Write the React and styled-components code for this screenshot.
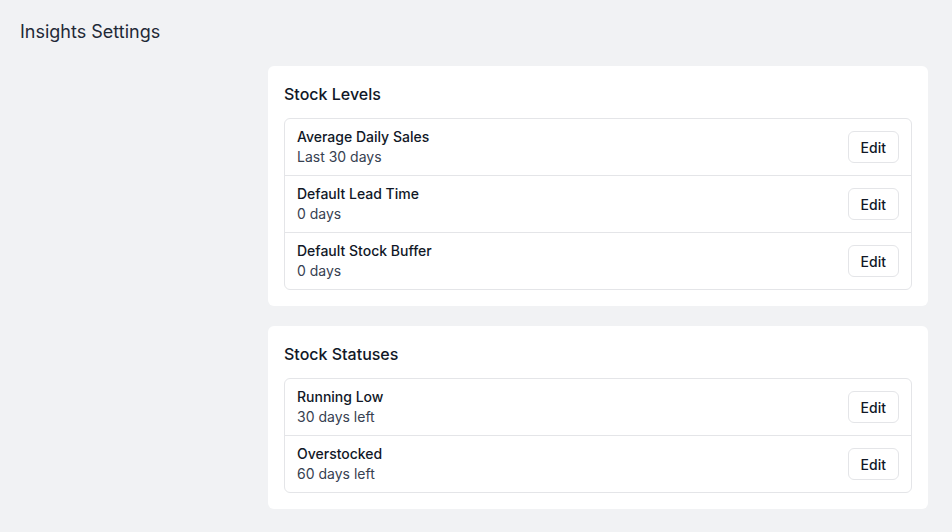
import styled, { createGlobalStyle } from "styled-components";

const GlobalStyle = createGlobalStyle`
    html, body {
        margin: 0;
        padding: 0;
        background-color: #f1f2f4;
    }
    body {
        font-family: Inter, "Noto Sans", sans-serif;
        color: #111827;
    }
`;

const Page = styled.div`
    padding: 20px 24px 24px 20px;
    box-sizing: border-box;
    min-height: 532px;
`;

const PageTitle = styled.h1`
    margin: 0;
    font-size: 18px;
    line-height: 24px;
    font-weight: 400;
    color: #1f2937;
`;

const Content = styled.div`
    display: flex;
    flex-direction: column;
    gap: 20px;
    margin: 22px 0 0 248px;
`;

const Card = styled.section`
    background-color: #ffffff;
    border-radius: 6px;
    padding: 16px;
`;

const CardTitle = styled.h2`
    margin: 0 0 12px;
    font-size: 16px;
    line-height: 24px;
    font-weight: 500;
    color: #111827;
`;

const List = styled.div`
    border: 1px solid #e4e5e8;
    border-radius: 6px;
`;

const Row = styled.div`
    display: flex;
    align-items: center;
    justify-content: space-between;
    padding: 8px 12px;
    border-top: ${(p) => (p.$first ? "none" : "1px solid #e4e5e8")};
`;

const Label = styled.div`
    font-size: 14px;
    line-height: 20px;
    font-weight: 450;
    color: #111827;
`;

const Value = styled.div`
    font-size: 14px;
    line-height: 20px;
    color: #374151;
`;

const EditButton = styled.button`
    height: 32px;
    padding: 0 12px;
    background-color: #ffffff;
    border: 1px solid #e4e5e8;
    border-radius: 6px;
    font-family: inherit;
    font-size: 14px;
    font-weight: 450;
    color: #111827;
    cursor: pointer;

    &:hover {
        background-color: #f9fafb;
    }
`;

const sections = [
    {
        title: "Stock Levels",
        items: [
            { label: "Average Daily Sales", value: "Last 30 days" },
            { label: "Default Lead Time", value: "0 days" },
            { label: "Default Stock Buffer", value: "0 days" },
        ],
    },
    {
        title: "Stock Statuses",
        items: [
            { label: "Running Low", value: "30 days left" },
            { label: "Overstocked", value: "60 days left" },
        ],
    },
];

const App = () => {
    return (
        <>
            <GlobalStyle />
            <Page>
                <PageTitle>Insights Settings</PageTitle>
                <Content>
                    {sections.map((section) => (
                        <Card key={section.title}>
                            <CardTitle>{section.title}</CardTitle>
                            <List>
                                {section.items.map((item, i) => (
                                    <Row key={item.label} $first={i === 0}>
                                        <div>
                                            <Label>{item.label}</Label>
                                            <Value>{item.value}</Value>
                                        </div>
                                        <EditButton>Edit</EditButton>
                                    </Row>
                                ))}
                            </List>
                        </Card>
                    ))}
                </Content>
            </Page>
        </>
    );
};

export default App;
